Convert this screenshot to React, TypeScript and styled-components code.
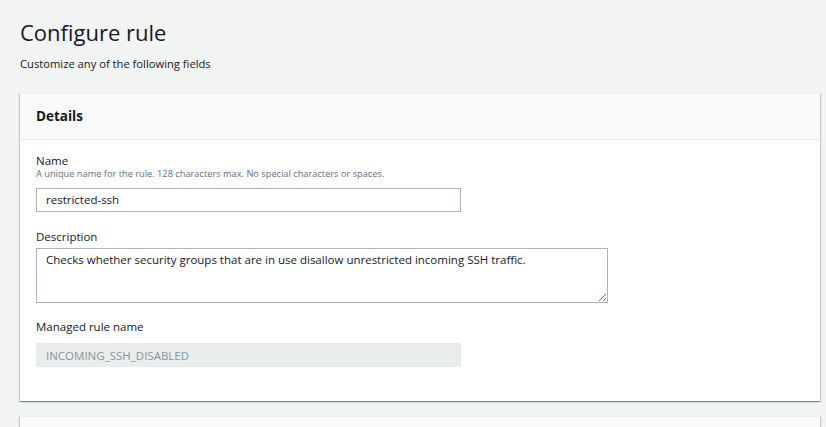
import styled, { createGlobalStyle } from 'styled-components'

const GlobalStyle = createGlobalStyle`
  html, body {
    margin: 0;
    padding: 0;
    background: #f2f3f3;
    font-family: "Open Sans", "Liberation Sans", Arial, sans-serif;
    color: #16191f;
  }
`

const Page = styled.main`
  padding: 18px 6px 0 20px;
  display: flex;
  flex-direction: column;
`

const Title = styled.h1`
  margin: 0;
  font-size: 22px;
  line-height: 28px;
  font-weight: 400;
  color: #16191f;
`

const Subtitle = styled.p`
  margin: 10px 0 0;
  font-size: 11.2px;
  line-height: 16px;
  color: #16191f;
`

const Card = styled.section<{ $collapsed?: boolean }>`
  margin-top: ${(p) => (p.$collapsed ? '15px' : '21px')};
  background: #ffffff;
  box-shadow: 0 1px 1px 0 rgba(0, 28, 36, 0.3), 1px 1px 1px 0 rgba(0, 28, 36, 0.15),
    -1px 1px 1px 0 rgba(0, 28, 36, 0.15);
  border-top: 1px solid #eaeded;
`

const CardHeader = styled.header<{ $tall?: boolean }>`
  background: #fafafa;
  border-bottom: 1px solid #eaeded;
  padding: 13px 16px;
  height: ${(p) => (p.$tall ? '19px' : 'auto')};
`

const CardTitle = styled.h2`
  margin: 0;
  font-size: 13.5px;
  line-height: 19px;
  font-weight: 700;
  color: #16191f;
`

const CardBody = styled.div`
  padding: 14px 16px 34px;
  display: flex;
  flex-direction: column;
`

const Field = styled.div<{ $space?: number }>`
  display: flex;
  flex-direction: column;
  margin-top: ${(p) => p.$space ?? 0}px;
`

const Label = styled.label`
  font-size: 11.5px;
  line-height: 14px;
  color: #16191f;
`

const Hint = styled.span`
  font-size: 9.25px;
  line-height: 11px;
  color: #687078;
`

const Control = styled.div<{ $gap: number }>`
  margin-top: ${(p) => p.$gap}px;
`

const TextInput = styled.input`
  box-sizing: border-box;
  width: 425px;
  height: 24px;
  padding: 0 9px;
  border: 1px solid #aab7b8;
  border-radius: 0;
  background: #ffffff;
  font-family: inherit;
  font-size: 11.5px;
  color: #16191f;
  outline: none;

  &:disabled {
    background: #eaeded;
    border-color: #eaeded;
    color: #879596;
  }
`

const TextArea = styled.textarea`
  box-sizing: border-box;
  display: block;
  width: 572px;
  height: 55px;
  padding: 3px 9px;
  border: 1px solid #aab7b8;
  border-radius: 0;
  font-family: inherit;
  font-size: 11.5px;
  line-height: 16px;
  color: #16191f;
  outline: none;
`

export default function App() {
  return (
    <>
      <GlobalStyle />
      <Page>
        <Title>Configure rule</Title>
        <Subtitle>Customize any of the following fields</Subtitle>

        <Card>
          <CardHeader>
            <CardTitle>Details</CardTitle>
          </CardHeader>
          <CardBody>
            <Field>
              <Label>Name</Label>
              <Hint>A unique name for the rule. 128 characters max. No special characters or spaces.</Hint>
              <Control $gap={8}>
                <TextInput defaultValue="restricted-ssh" />
              </Control>
            </Field>
            <Field $space={18}>
              <Label>Description</Label>
              <Control $gap={4}>
                <TextArea defaultValue="Checks whether security groups that are in use disallow unrestricted incoming SSH traffic." />
              </Control>
            </Field>
            <Field $space={17}>
              <Label>Managed rule name</Label>
              <Control $gap={9}>
                <TextInput disabled value="INCOMING_SSH_DISABLED" readOnly />
              </Control>
            </Field>
          </CardBody>
        </Card>

        <Card $collapsed>
          <CardHeader $tall />
        </Card>
      </Page>
    </>
  )
}
